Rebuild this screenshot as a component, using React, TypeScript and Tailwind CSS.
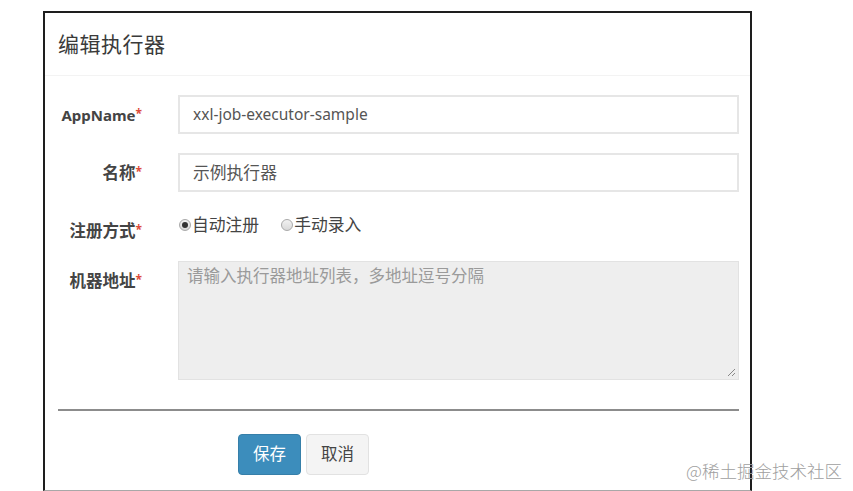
import React from "react";

const FONT = { fontFamily: '"Noto Sans", "Noto Sans CJK SC", sans-serif' };

function Label({ text, className = "" }: { text: string; className?: string }) {
  return (
    <div className={`w-[97px] shrink-0 text-right font-bold leading-[20px] text-[#444] ${className}`}>
      {text}
      <span className="text-[#dd4b39] text-[12px] align-top relative -top-[1px]">*</span>
    </div>
  );
}

function Radio({ checked }: { checked?: boolean }) {
  return (
    <span className="inline-flex items-center justify-center w-[12px] h-[12px] rounded-full border border-[#a9a9a9] bg-gradient-to-b from-[#f2f2f2] to-[#d9d9d9] mr-[1px]">
      {checked && <span className="w-[6px] h-[6px] rounded-full bg-[#333]" />}
    </span>
  );
}

export default function App() {
  return (
    <div className="relative w-[853px] h-[491px] bg-white overflow-hidden" style={FONT}>
      <div className="ml-[43px] mt-[11px] w-[709px] h-[480px] border-l-2 border-r-2 border-t-2 border-[#1e1e1e] border-b border-b-[#a8a8a8] flex flex-col">
        <div className="h-[63px] border-b border-[#f3f3f3] flex items-center pl-[13px]">
          <span className="text-[21px] tracking-[0.5px] text-[#3a3a3a] leading-none">编辑执行器</span>
        </div>
        <div className="flex flex-col">
          <div className="flex items-center mt-[19px]">
            <Label text="AppName" className="text-[15px]" />
            <div className="ml-[36px] w-[561px] h-[39px] border-2 border-[#e6e6e6] flex items-center pl-[13px] text-[15.5px] text-[#555]">
              xxl-job-executor-sample
            </div>
          </div>
          <div className="flex items-center mt-[19px]">
            <Label text="名称" className="text-[16.5px]" />
            <div className="ml-[36px] w-[561px] h-[39px] border-2 border-[#e6e6e6] flex items-center pl-[13px] text-[16.8px] text-[#555]">
              示例执行器
            </div>
          </div>
          <div className="flex items-start mt-[21px]">
            <Label text="注册方式" className="mt-[8px] text-[16.5px]" />
            <div className="ml-[37px] h-[24px] flex items-center text-[16.8px] text-[#444]">
              <Radio checked />
              <span>自动注册</span>
              <span className="w-[22px]" />
              <Radio />
              <span>手动录入</span>
            </div>
          </div>
          <div className="flex items-start mt-[20px]">
            <Label text="机器地址" className="mt-[10px] text-[16.5px]" />
            <div className="relative ml-[36px] w-[561px] h-[119px] bg-[#eeeeee] border border-[#e2e2e2] pl-[8px] pt-[3px] text-[16.5px] text-[#9a9a9a] leading-[22px]">
              请输入执行器地址列表，多地址逗号分隔
              <svg className="absolute right-[2px] bottom-[2px]" width="10" height="10" viewBox="0 0 10 10">
                <line x1="9" y1="2" x2="2" y2="9" stroke="#888" strokeWidth="1" />
                <line x1="9" y1="6" x2="6" y2="9" stroke="#888" strokeWidth="1" />
              </svg>
            </div>
          </div>
          <div className="ml-[13px] mr-[11px] mt-[29px] h-[2px] bg-[#8c8c8c]" />
          <div className="flex mt-[23px] ml-[193px] gap-[5px]">
            <button className="w-[63px] h-[41px] rounded-[4px] bg-[#3c8dbc] border border-[#367fa9] text-white text-[16.5px]">
              保存
            </button>
            <button className="w-[63px] h-[41px] rounded-[4px] bg-[#f4f4f4] border border-[#e2e2e2] text-[#444] text-[16.5px]">
              取消
            </button>
          </div>
        </div>
      </div>
      <div
        className="absolute left-[686px] top-[460px] text-[17.5px] leading-[22px] text-[#a0a0a0] font-light whitespace-nowrap"
        style={{ fontFamily: '"Noto Sans CJK SC", sans-serif' }}
      >
        @稀土掘金技术社区
      </div>
    </div>
  );
}
